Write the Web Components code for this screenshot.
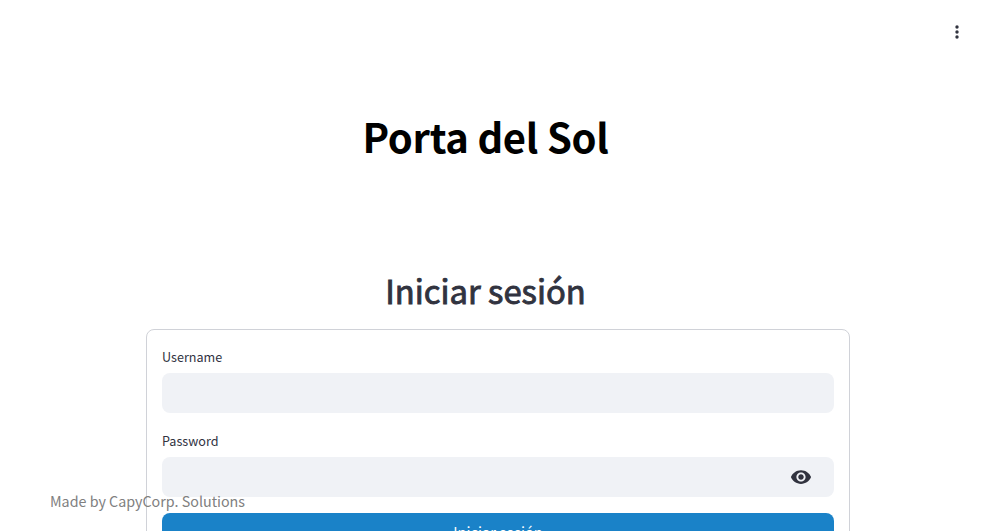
<!DOCTYPE html>
<html><head><meta charset="utf-8"><style>
html,body{margin:0;height:531px;overflow:hidden;background:#fff}
body{font-family:"Noto Sans CJK JP","Noto Sans",sans-serif}
</style></head><body>
<app-root></app-root>
<script>
function def(name,html){customElements.define(name,class extends HTMLElement{constructor(){super();this.attachShadow({mode:'open'}).innerHTML=html}})}
def('menu-dots',`<style>:host{display:block;position:absolute;top:25px;right:35px;width:6px;height:14px}svg{display:block}</style><svg width="6" height="14" viewBox="0 0 6 14"><circle cx="3" cy="2" r="1.7" fill="#31333f"/><circle cx="3" cy="7" r="1.7" fill="#31333f"/><circle cx="3" cy="12" r="1.7" fill="#31333f"/></svg>`);
def('text-field',`<style>:host{display:block;margin-bottom:16px}.l{font-size:12.6px;line-height:20px;height:20px;color:#31333f;margin-bottom:6px}.b{height:40px;border-radius:8px;background:#f0f2f6;display:flex;align-items:center;justify-content:flex-end;padding-right:22px}</style><div class="l"><slot name="label"></slot></div><div class="b"><slot></slot></div>`);
def('eye-icon',`<style>:host{display:block;width:22px;height:22px}svg{display:block}</style><svg width="22" height="22" viewBox="0 0 24 24"><path fill="#31333f" d="M12 4.5C7 4.5 2.73 7.61 1 12c1.73 4.39 6 7.5 11 7.5s9.27-3.11 11-7.5c-1.73-4.39-6-7.5-11-7.5zM12 17c-2.76 0-5-2.24-5-5s2.24-5 5-5 5 2.24 5 5-2.24 5-5 5zm0-8c-1.66 0-3 1.34-3 3s1.34 3 3 3 3-1.34 3-3-1.34-3-3-3z"/></svg>`);
def('login-form',`<style>:host{display:block;box-sizing:border-box;width:704px;margin-left:146px;border:1px solid #d0d2d8;border-radius:8px;padding:17px 15px 16px;height:300px}button{display:block;box-sizing:border-box;width:100%;height:40px;border:0;border-radius:8px;background:#1a82c8;color:#fff;font:inherit;font-size:14.6px;padding:0 0 4px}</style><text-field style="margin-bottom:18px"><span slot="label">Username</span></text-field><text-field><span slot="label">Password</span><eye-icon></eye-icon></text-field><button>Iniciar sesión</button>`);
def('app-root',`<style>:host{display:block;position:relative;height:531px;overflow:hidden}
h1,h2{margin:0;width:971px;text-align:center}
h1{padding-top:110px;height:52px;line-height:52px;font-size:40px;font-weight:700;letter-spacing:-.3px;color:#000}
h2{padding-top:104px;height:48px;line-height:48px;font-size:32.8px;font-weight:400;-webkit-text-stroke:.9px #31333f;color:#31333f}
.foot{position:absolute;left:50px;top:491px;font-size:14.3px;line-height:20px;color:#808080}
.f{margin-top:15px}</style>
<menu-dots></menu-dots><h1>Porta del Sol</h1><h2>Iniciar sesión</h2><div class="f"><login-form></login-form></div><div class="foot">Made by CapyCorp. Solutions</div>`);
</script></body></html>
